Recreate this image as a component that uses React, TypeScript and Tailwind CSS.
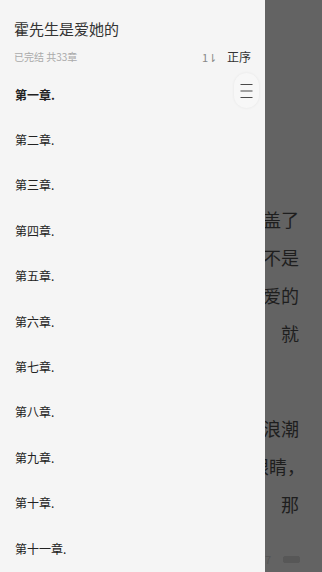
const chapters = [
  "第一章.",
  "第二章.",
  "第三章.",
  "第四章.",
  "第五章.",
  "第六章.",
  "第七章.",
  "第八章.",
  "第九章.",
  "第十章.",
  "第十一章.",
]

const font = { fontFamily: '"Noto Sans CJK SC", "Noto Sans", sans-serif' }

function ReaderPage() {
  return (
    <div className="h-full w-full bg-[#636363] text-[18px] leading-[38px] text-[#1e1e1e]">
      <div className="pt-[200px] pr-[23px]">
        <div className="flex justify-end whitespace-nowrap">他轻轻地替她盖了</div>
        <div className="flex justify-end whitespace-nowrap">这一切都是不是</div>
        <div className="flex justify-end whitespace-nowrap">原来他是爱的</div>
        <div className="flex justify-end whitespace-nowrap">就</div>
        <div className="mt-[57px] flex justify-end whitespace-nowrap">心里涌起一股浪潮</div>
        <div className="mr-[-6px] flex justify-end whitespace-nowrap">她闭上了眼睛，</div>
        <div className="flex justify-end whitespace-nowrap">那</div>
      </div>
      <div className="mt-[31px] flex items-center justify-end gap-[12px] pr-[22px]">
        <span className="text-[11px] leading-none text-[#555]">17</span>
        <div className="h-[7px] w-[17px] rounded-[2px] border border-[#575757] bg-[#575757]" />
      </div>
    </div>
  )
}

function MenuIcon() {
  return (
    <svg width="13" height="16" viewBox="0 0 13 16">
      <path d="M0.5 1.5h12M0.5 8h12M0.5 14.5h12" stroke="#4a4a4a" strokeWidth="1.2" />
    </svg>
  )
}

export default function App() {
  return (
    <div className="relative h-[572px] w-[322px] overflow-hidden" style={font}>
      <ReaderPage />
      <div className="absolute left-0 top-0 flex h-full w-[265px] flex-col bg-[#f5f5f5]">
        <div className="px-[14px] pt-[18px]">
          <div className="text-[15px] leading-[22px] text-[#333]">霍先生是爱她的</div>
          <div className="mt-[10px] flex items-center justify-between">
            <span className="text-[10px] leading-[14px] text-[#aaa]">已完结 共33章</span>
            <div className="flex items-center gap-[10px]">
              <span className="text-[11px] leading-none text-[#888]">1⇂</span>
              <span className="text-[12px] leading-none text-[#333]">正序</span>
            </div>
          </div>
        </div>
        <div className="relative mt-[8px]">
          <div className="absolute right-[6px] top-[1px] flex h-[35px] w-[25px] items-center justify-center rounded-full bg-[#f7f7f7] shadow-[0_0_3px_rgba(0,0,0,0.07)]">
            <MenuIcon />
          </div>
          {chapters.map((c, i) => (
            <div
              key={i}
              className={`flex h-[45.4px] items-center pl-[15px] text-[12px] text-[#222] ${i === 0 ? "font-bold" : ""}`}
            >
              {c}
            </div>
          ))}
        </div>
      </div>
    </div>
  )
}
